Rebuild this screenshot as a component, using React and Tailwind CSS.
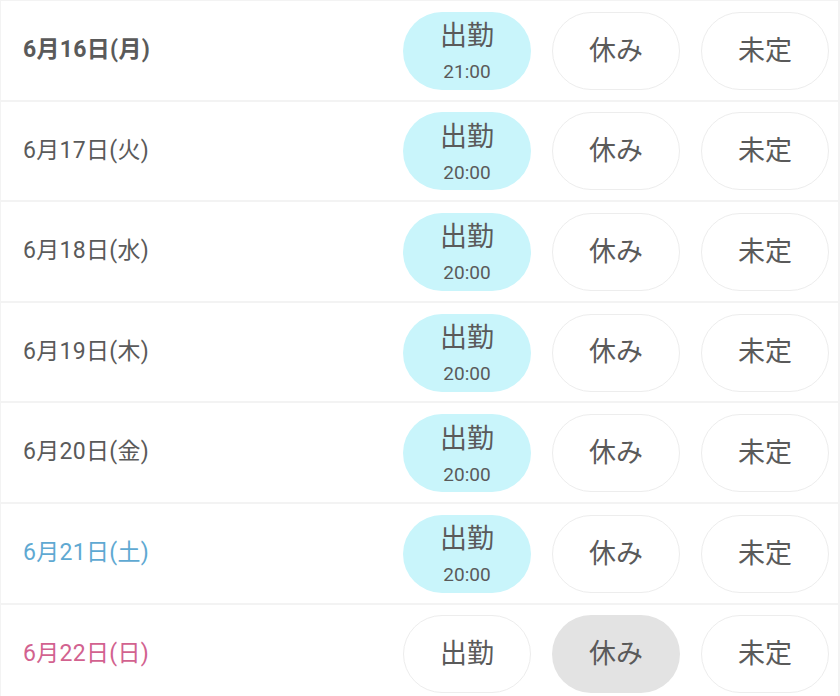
import React from 'react'

const days = [
  { label: '6月16日(月)', status: 'work', time: '21:00', bold: true },
  { label: '6月17日(火)', status: 'work', time: '20:00' },
  { label: '6月18日(水)', status: 'work', time: '20:00' },
  { label: '6月19日(木)', status: 'work', time: '20:00' },
  { label: '6月20日(金)', status: 'work', time: '20:00' },
  { label: '6月21日(土)', status: 'work', time: '20:00', color: 'text-[#5fa9d2]' },
  { label: '6月22日(日)', status: 'off', color: 'text-[#d2628f]' },
]

function Pill({ active, activeBg, children }) {
  return (
    <div
      className={`w-[128px] h-[78px] rounded-full flex flex-col items-center justify-center border ${
        active ? `${activeBg} border-transparent` : 'bg-white border-[#ededed]'
      }`}
    >
      {children}
    </div>
  )
}

function Row({ day }) {
  return (
    <div className="h-[100.6px] flex items-center border-b-2 border-[#f3f3f3] pl-[22px] pr-[9px]">
      <div className={`flex-1 text-[23px] tracking-[0.3px] ${day.bold ? 'font-bold' : ''} ${day.color || 'text-[#5a5a5a]'}`}>
        {day.label}
      </div>
      <div className="flex gap-[21px] pt-[1px]">
        <Pill active={day.status === 'work'} activeBg="bg-[#c9f5fb]">
          <span className={`text-[27px] leading-[32px] text-[#5a5a5a] ${day.time ? 'pt-[3px]' : ''}`}>出勤</span>
          {day.time && <span className="text-[19px] leading-[24px] mt-[8px] text-[#5a5a5a]">{day.time}</span>}
        </Pill>
        <Pill active={day.status === 'off'} activeBg="bg-[#e3e3e3]">
          <span className="text-[27px] text-[#5a5a5a]">休み</span>
        </Pill>
        <Pill active={false}>
          <span className="text-[27px] text-[#5a5a5a]">未定</span>
        </Pill>
      </div>
    </div>
  )
}

export default function App() {
  return (
    <div
      className="w-[840px] h-[696px] overflow-hidden bg-[#f3f3f3] pl-[1px] pr-[2px]"
      style={{ fontFamily: 'Roboto, "Noto Sans CJK JP", sans-serif' }}
    >
      <div className="bg-white border-t-2 border-[#f3f3f3] -mt-[1px]">
        {days.map(d => (
          <Row key={d.label} day={d} />
        ))}
      </div>
    </div>
  )
}
